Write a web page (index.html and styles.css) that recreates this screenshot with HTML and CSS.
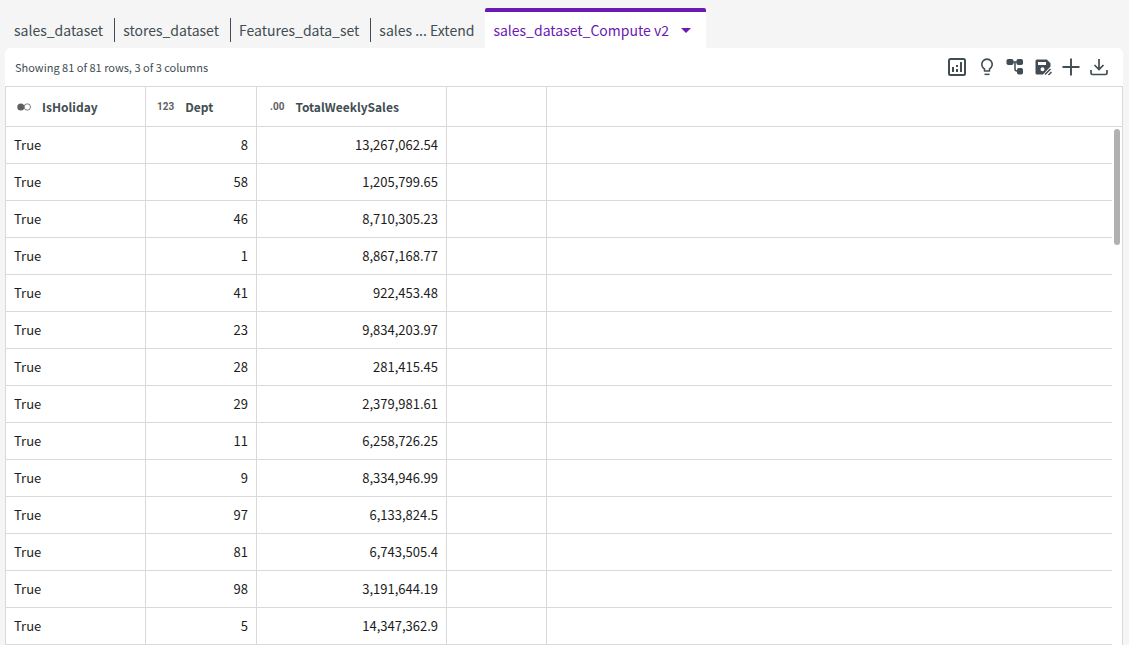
FILE: index.html
```html
<!DOCTYPE html>
<html lang="en">
<head>
<meta charset="utf-8">
<title>sales_dataset_Compute v2</title>
<link rel="stylesheet" href="styles.css">
</head>
<body>
<div class="app">
  <nav class="tabs" aria-label="Datasets">
    <button class="tab" type="button">sales_dataset</button>
    <button class="tab" type="button">stores_dataset</button>
    <button class="tab" type="button">Features_data_set</button>
    <button class="tab" type="button">sales ... Extend</button>
    <button class="tab tab-active" type="button" aria-current="page">sales_dataset_Compute v2
      <svg class="caret" viewBox="0 0 10 5" aria-hidden="true"><path d="M0 0h10L5 5z"/></svg>
    </button>
  </nav>
  <main class="panel">
    <header class="toolbar">
      <p class="summary">Showing 81 of 81 rows, 3 of 3 columns</p>
      <div class="actions">
        <button class="action action-chart" type="button" aria-label="Charts">
          <svg class="icon" viewBox="0 0 20 20"><rect x="2" y="2" width="16" height="16" rx="1.5" fill="none" stroke="currentColor" stroke-width="2"/><path d="M5 10h2v5H5zM9 8h2v2H9zM9 12h2v3H9zM13 5h2v10h-2z"/></svg>
        </button>
        <button class="action" type="button" aria-label="Insights">
          <svg class="icon" viewBox="0 0 20 20"><path d="M7.5 14v-2.1a5.2 5.2 0 1 1 5 0V14z" fill="none" stroke="currentColor" stroke-width="1.6" stroke-linejoin="round"/><path d="M7.5 16.6h5v1.5h-5z"/></svg>
        </button>
        <button class="action" type="button" aria-label="Pipeline">
          <svg class="icon" viewBox="0 0 20 20"><rect x="1.5" y="2" width="7" height="6" rx="1.8"/><rect x="11.5" y="2" width="6.5" height="6" rx="1.8"/><rect x="12" y="11" width="6" height="6.5" rx="1.8"/><path d="M7 5h6M10 5v7q0 2 2 2h2" fill="none" stroke="currentColor" stroke-width="1.5"/></svg>
        </button>
        <button class="action" type="button" aria-label="Save as">
          <svg class="icon" viewBox="0 0 20 20"><path fill-rule="evenodd" d="M4 2.500h9.800l3.700 3.700v3.300l-7.500 8H4q-1.500 0-1.500-1.500V4q0-1.500 1.500-1.500zM5 5v3h8V5zM9.500 10.300a2 2 0 1 0 0 4 2 2 0 0 0 0-4z"/><path d="M12 17.500l5.500-5.500M15.500 18l3-3" fill="none" stroke="currentColor" stroke-width="1.500"/></svg>
        </button>
        <button class="action" type="button" aria-label="Add">
          <svg class="icon" viewBox="0 0 20 20"><path d="M10 1.500v17M1.500 10h17" fill="none" stroke="currentColor" stroke-width="1.900"/></svg>
        </button>
        <button class="action" type="button" aria-label="Download">
          <svg class="icon" viewBox="0 0 20 20"><path d="M10 2v10M5.500 8l4.500 4.500L14.500 8M2 13v3q0 1.500 1.500 1.500h13q1.500 0 1.500-1.500v-3" fill="none" stroke="currentColor" stroke-width="1.700"/></svg>
        </button>
      </div>
    </header>
    <div class="grid">
      <table class="data">
        <colgroup><col class="col-holiday"><col class="col-dept"><col class="col-sales"><col class="col-blank"><col><col class="col-gutter"></colgroup>
        <thead>
          <tr>
            <th scope="col"><span class="head"><svg class="type type-bool" viewBox="0 0 14 8" aria-hidden="true"><circle cx="3.800" cy="4" r="3.500"/><circle cx="10.300" cy="4" r="3.200" fill="none" stroke="currentColor" stroke-width="0.800"/></svg>IsHoliday</span></th>
            <th scope="col"><span class="head"><span class="type">123</span>Dept</span></th>
            <th scope="col"><span class="head head-sales"><span class="type">.00</span>TotalWeeklySales</span></th>
            <td></td><td class="filler"></td><td class="gutter"></td>
          </tr>
        </thead>
        <tbody>
          <tr><td>True</td><td class="num">8</td><td class="num">13,267,062.54</td><td></td><td class="filler"></td><td class="gutter"></td></tr>
          <tr><td>True</td><td class="num">58</td><td class="num">1,205,799.65</td><td></td><td class="filler"></td><td class="gutter"></td></tr>
          <tr><td>True</td><td class="num">46</td><td class="num">8,710,305.23</td><td></td><td class="filler"></td><td class="gutter"></td></tr>
          <tr><td>True</td><td class="num">1</td><td class="num">8,867,168.77</td><td></td><td class="filler"></td><td class="gutter"></td></tr>
          <tr><td>True</td><td class="num">41</td><td class="num">922,453.48</td><td></td><td class="filler"></td><td class="gutter"></td></tr>
          <tr><td>True</td><td class="num">23</td><td class="num">9,834,203.97</td><td></td><td class="filler"></td><td class="gutter"></td></tr>
          <tr><td>True</td><td class="num">28</td><td class="num">281,415.45</td><td></td><td class="filler"></td><td class="gutter"></td></tr>
          <tr><td>True</td><td class="num">29</td><td class="num">2,379,981.61</td><td></td><td class="filler"></td><td class="gutter"></td></tr>
          <tr><td>True</td><td class="num">11</td><td class="num">6,258,726.25</td><td></td><td class="filler"></td><td class="gutter"></td></tr>
          <tr><td>True</td><td class="num">9</td><td class="num">8,334,946.99</td><td></td><td class="filler"></td><td class="gutter"></td></tr>
          <tr><td>True</td><td class="num">97</td><td class="num">6,133,824.5</td><td></td><td class="filler"></td><td class="gutter"></td></tr>
          <tr><td>True</td><td class="num">81</td><td class="num">6,743,505.4</td><td></td><td class="filler"></td><td class="gutter"></td></tr>
          <tr><td>True</td><td class="num">98</td><td class="num">3,191,644.19</td><td></td><td class="filler"></td><td class="gutter"></td></tr>
          <tr><td>True</td><td class="num">5</td><td class="num">14,347,362.9</td><td></td><td class="filler"></td><td class="gutter"></td></tr>
        </tbody>
      </table>
      <div class="thumb" aria-hidden="true"></div>
    </div>
  </main>
</div>
</body>
</html>
```

FILE: styles.css
```css
* {
  box-sizing: border-box;
}

body {
  margin: 0;
  background: #f5f5f5;
  color: #414d52;
  font-family: "Noto Sans CJK SC", "Noto Sans", sans-serif;
}

button {
  margin: 0;
  border: 0;
  background: none;
  color: inherit;
  font: inherit;
  cursor: pointer;
}

.app {
  padding: 8px 6px 0 5px;
}

.tabs {
  display: flex;
  align-items: center;
  height: 40px;
}

.tab {
  height: 24px;
  margin-top: 4px;
  padding: 0 11px 0 8px;
  border-left: 1px solid #414d52;
  font-size: 14px;
  line-height: 24px;
  white-space: nowrap;
}

.tab:first-child,
.tab-active {
  border-left: 0;
}

.tab:first-child {
  padding-left: 9px;
}

.tab-active {
  display: flex;
  align-items: center;
  gap: 12px;
  height: 40px;
  margin-top: 0;
  padding: 0 15px 0 8px;
  border-top: 4px solid #6a19b3;
  border-radius: 2px 2px 0 0;
  background: #fff;
  color: #6a19b3;
}

.caret {
  width: 10px;
  height: 5px;
  fill: currentColor;
}

.panel {
  border-radius: 6px 6px 0 0;
  background: #fff;
}

.toolbar {
  display: flex;
  align-items: center;
  justify-content: space-between;
  height: 38px;
  padding: 0 14px 0 10px;
}

.summary {
  margin: 0;
  font-size: 11px;
  line-height: 18px;
}

.actions {
  display: flex;
  gap: 8px;
}

.action {
  display: flex;
  padding: 0;
}

.action-chart {
  margin-right: 2px;
}

.icon {
  width: 20px;
  height: 20px;
  fill: currentColor;
}

.grid {
  position: relative;
  border: 1px solid #d9d9d9;
  border-bottom: 0;
}

.data {
  width: 100%;
  table-layout: fixed;
  border-collapse: separate;
  border-spacing: 0;
  font-size: 13px;
  line-height: 20px;
}

.col-holiday {
  width: 140px;
}

.col-dept {
  width: 111px;
}

.col-sales {
  width: 190px;
}

.col-blank {
  width: 100px;
}

.col-gutter {
  width: 10px;
}

.data th,
.data td {
  height: 37px;
  padding: 0 8px;
  border-right: 1px solid #d9d9d9;
  border-bottom: 1px solid #d9d9d9;
  text-align: left;
}

.data thead th,
.data thead td {
  height: 40px;
}

.data tbody {
  color: #1c1c1c;
}

.data .num {
  text-align: right;
}

.data .filler,
.data .gutter {
  padding: 0;
  border-right: 0;
}

.data tbody .gutter {
  border-bottom: 0;
}

.head {
  display: flex;
  align-items: center;
  gap: 11px;
  padding-left: 3px;
  font-size: 12px;
  font-weight: 700;
}

.head-sales {
  padding-left: 5px;
}

.type {
  color: #5f5f5f;
  font-family: Roboto, sans-serif;
  font-size: 10px;
  line-height: 18px;
}

.type-bool {
  width: 14px;
  height: 8px;
  fill: currentColor;
}

.thumb {
  position: absolute;
  top: 42px;
  right: 2px;
  width: 6px;
  height: 116px;
  border-radius: 3px;
  background: #b1b1b1;
}
```
